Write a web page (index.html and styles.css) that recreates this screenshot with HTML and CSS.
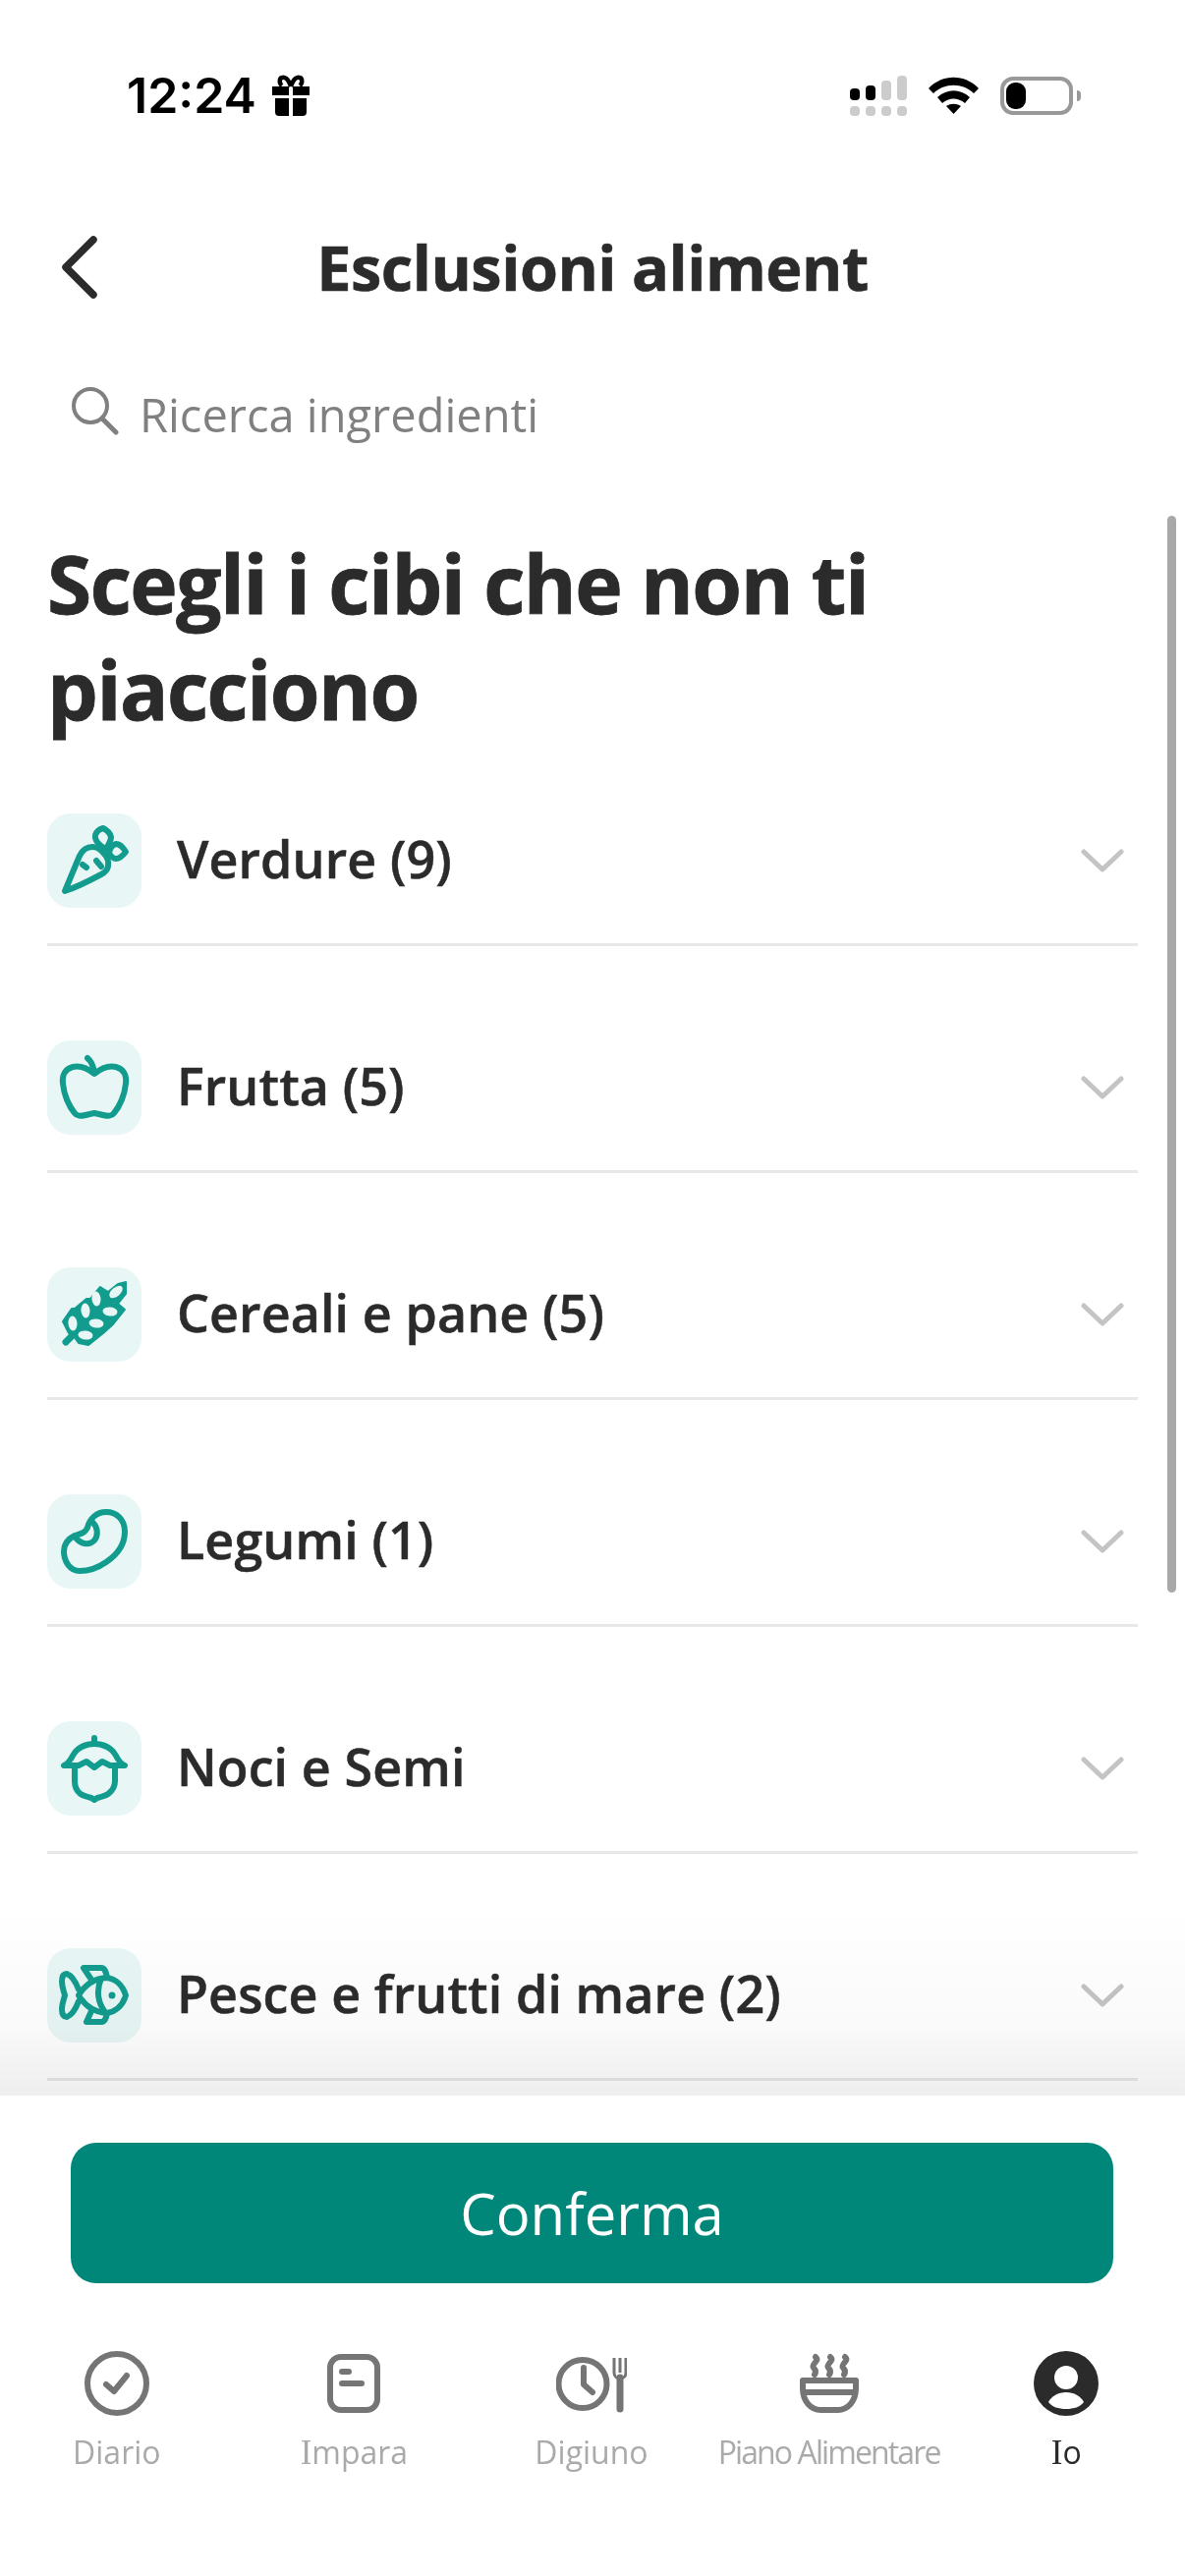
FILE: index.html
```html
<!DOCTYPE html>
<html lang="it">
<head>
    <meta charset="UTF-8">
    <meta name="viewport" content="width=device-width, initial-scale=1.0">
    <title>Esclusioni alimentari</title>
    <link rel="stylesheet" href="styles.css">
</head>
<body>
    <div class="phone">
        <div class="status">
            <div class="clock">
                <span>12:24</span>
                <svg class="gift" viewBox="0 0 40 42"><path d="M1 12h17v9H1zM22 12h17v9H22zM4 24h14v18H8a4 4 0 0 1-4-4zM22 24h14v14a4 4 0 0 1-4 4H22z" fill="#000"/><path d="M20 12c-3-9-7-10-9-9-3 1-3 6 0 8M20 12c3-9 7-10 9-9 3 1 3 6 0 8" fill="none" stroke="#000" stroke-width="4.500"/></svg>
            </div>
            <div class="status-icons">
                <svg class="signal" viewBox="0 0 58 41">
                    <rect x="0" y="13" width="10" height="12" rx="4" fill="#000"/>
                    <rect x="16" y="10" width="10" height="15" rx="4" fill="#000"/>
                    <rect x="32" y="5" width="10" height="20" rx="4" fill="#ccc"/>
                    <rect x="48" y="0" width="10" height="25" rx="4" fill="#ccc"/>
                    <rect x="0" y="31" width="10" height="10" rx="4" fill="#ccc"/>
                    <rect x="16" y="31" width="10" height="10" rx="4" fill="#ccc"/>
                    <rect x="32" y="31" width="10" height="10" rx="4" fill="#ccc"/>
                    <rect x="48" y="31" width="10" height="10" rx="4" fill="#ccc"/>
                </svg>
                <svg class="wifi" viewBox="0 0 51 38"><path d="M0 12C14-3 37-3 51 12l-5 5C35 6 16 6 5 17z"/><path d="M9 21c10-9 23-9 33 0l-5 6c-7-6-16-6-23 0z"/><path d="M18 30c5-3 10-3 15 0l-7.500 8z"/></svg>
                <div class="battery"><div class="battery-level"></div></div>
                <div class="battery-cap"></div>
            </div>
        </div>

        <div class="header">
            <svg class="back" viewBox="0 0 38 64"><path d="M33 4 5 32l28 28" fill="none" stroke="#2b2b2b" stroke-width="7.500" stroke-linecap="round" stroke-linejoin="round"/></svg>
            <h1 class="title">Esclusioni aliment</h1>
        </div>

        <div class="search">
            <svg class="search-icon" viewBox="0 0 50 50"><circle cx="20" cy="20" r="17" fill="none" stroke="#808080" stroke-width="4"/><path d="m32 33 14 14" stroke="#808080" stroke-width="5" stroke-linecap="round"/></svg>
            <span>Ricerca ingredienti</span>
        </div>

        <div class="content">
            <h2 class="heading">Scegli i cibi che non ti piacciono</h2>

            <div class="row">
                <div class="row-icon">
                    <svg viewBox="0 0 96 96" fill="none" stroke="#129c8e" stroke-width="6" stroke-linecap="round" stroke-linejoin="round">
                        <path d="M18 79 33 43c3-6 7-9 13-9 4 0 8 2 11 6 4 4 6 9 5 14-1 4-3 6-7 8-13 7-25 13-37 17z"/>
                        <path d="M36 52l4 3M50 48l5 6"/>
                        <path d="M56 34c-5-4-8-8-7-12 1-3 4-6 8-7 4 2 7 5 8 9 0 3-2 7-5 12z"/>
                        <path d="M63 40c1-5 3-8 7-9 4 0 7 3 10 8-3 4-6 7-10 7-3 0-5-2-7-6z"/>
                    </svg>
                </div>
                <span class="row-label">Verdure (9)</span>
                <svg class="chevron" viewBox="0 0 44 24"><path d="M3 3l19 18L41 3" fill="none" stroke="#c4c4c4" stroke-width="5" stroke-linecap="round" stroke-linejoin="round"/></svg>
            </div>

            <div class="row">
                <div class="row-icon">
                    <svg viewBox="0 0 96 96" fill="none" stroke="#129c8e" stroke-width="6" stroke-linecap="round" stroke-linejoin="round">
                        <path d="M48 34C42 29 34 25 26 27 18 29 15 36 16 44 17 55 22 67 28 74 32 79 38 76 48 74 58 76 64 79 68 74 74 67 79 55 80 44 81 36 78 29 70 27 62 25 54 29 48 34z"/>
                        <path d="M48 33C47 26 45 21 41 18"/>
                    </svg>
                </div>
                <span class="row-label">Frutta (5)</span>
                <svg class="chevron" viewBox="0 0 44 24"><path d="M3 3l19 18L41 3" fill="none" stroke="#c4c4c4" stroke-width="5" stroke-linecap="round" stroke-linejoin="round"/></svg>
            </div>

            <div class="row">
                <div class="row-icon">
                    <svg viewBox="0 0 96 96">
                        <path d="M19 76l10-10" fill="none" stroke="#129c8e" stroke-width="7" stroke-linecap="round"/>
                        <path d="M80 15v12l-8 10 7 6-12 15-10 9-15 12-10-2-5-7-5-3-6-12 9-13h3l12-10h4l10-12 8 5 10-8z" fill="#129c8e" stroke="#129c8e" stroke-width="2" stroke-linejoin="round"/>
                        <g fill="#e8f6f5">
                            <ellipse cx="70" cy="25" rx="8" ry="4.500" transform="rotate(-40 70 25)"/>
                            <ellipse cx="50" cy="32" rx="4.500" ry="7.500" transform="rotate(-5 50 32)"/>
                            <ellipse cx="39" cy="44" rx="4.500" ry="7.500" transform="rotate(-5 39 44)"/>
                            <ellipse cx="26" cy="57" rx="4.500" ry="7.500" transform="rotate(-5 26 57)"/>
                            <ellipse cx="64" cy="45" rx="7.500" ry="4.500" transform="rotate(5 64 45)"/>
                            <ellipse cx="50" cy="57" rx="7.500" ry="4.500" transform="rotate(5 50 57)"/>
                            <ellipse cx="39" cy="69" rx="7.500" ry="4.500" transform="rotate(5 39 69)"/>
                        </g>
                    </svg>
                </div>
                <span class="row-label">Cereali e pane (5)</span>
                <svg class="chevron" viewBox="0 0 44 24"><path d="M3 3l19 18L41 3" fill="none" stroke="#c4c4c4" stroke-width="5" stroke-linecap="round" stroke-linejoin="round"/></svg>
            </div>

            <div class="row">
                <div class="row-icon">
                    <svg viewBox="0 0 96 96" fill="none" stroke="#129c8e" stroke-width="6" stroke-linecap="round" stroke-linejoin="round">
                        <path d="M60 18C70 18 79 25 79 38 79 50 72 61 60 69 50 76 40 78 33 78 23 78 17 68 17 58 17 50 22 45 28 42 34 40 38 40 41 34 43 25 50 18 60 18z"/>
                        <path d="M29 44C33 50 42 53 48 47 52 42 52 34 46 28"/>
                    </svg>
                </div>
                <span class="row-label">Legumi (1)</span>
                <svg class="chevron" viewBox="0 0 44 24"><path d="M3 3l19 18L41 3" fill="none" stroke="#c4c4c4" stroke-width="5" stroke-linecap="round" stroke-linejoin="round"/></svg>
            </div>

            <div class="row">
                <div class="row-icon">
                    <svg viewBox="0 0 96 96" fill="none" stroke="#129c8e" stroke-width="6" stroke-linecap="round" stroke-linejoin="round">
                        <path d="M48 17v6"/>
                        <path d="M17 45C22 43 24 39 26 35 30 27 39 23 48 23 57 23 66 27 70 35 72 39 74 43 79 45H66L64 45 56 41 48 47 40 41 32 45z"/>
                        <path d="M28 47V61C28 67 30 71 34 74 37 76 41 77 45 78L48 80 51 78C55 77 59 76 62 74 66 71 69 67 69 61V47"/>
                    </svg>
                </div>
                <span class="row-label">Noci e Semi</span>
                <svg class="chevron" viewBox="0 0 44 24"><path d="M3 3l19 18L41 3" fill="none" stroke="#c4c4c4" stroke-width="5" stroke-linecap="round" stroke-linejoin="round"/></svg>
            </div>

            <div class="row">
                <div class="row-icon">
                    <svg viewBox="0 0 96 96" fill="none" stroke="#129c8e" stroke-width="6" stroke-linecap="round" stroke-linejoin="round">
                        <path d="M32 48C38 38 48 31 60 30 70 31 77 38 80 48 77 58 70 65 60 66 48 65 38 58 32 48z"/>
                        <path d="M55 31C50 42 51 55 59 65"/>
                        <circle cx="66" cy="48" r="2" fill="#129c8e" stroke-width="3"/>
                        <path d="M32 42C29 34 25 28 20 26 16 26 15 30 15 34 15 40 17 44 18 48 17 52 15 56 15 62 15 66 16 70 20 70 25 68 29 62 32 54"/>
                        <path d="M45 32 37 20H55C59 20 60 25 61 30"/>
                        <path d="M45 64 40 75H55C59 75 60 71 61 66"/>
                    </svg>
                </div>
                <span class="row-label">Pesce e frutti di mare (2)</span>
                <svg class="chevron" viewBox="0 0 44 24"><path d="M3 3l19 18L41 3" fill="none" stroke="#c4c4c4" stroke-width="5" stroke-linecap="round" stroke-linejoin="round"/></svg>
            </div>

            <div class="fade"></div>
            <div class="scrollbar"></div>
        </div>

        <div class="bottom">
            <button class="confirm">Conferma</button>
            <div class="tabs">
                <div class="tab">
                    <svg viewBox="0 0 70 70" fill="none" stroke="#757575" stroke-width="6" stroke-linecap="round" stroke-linejoin="round"><circle cx="35" cy="33" r="30"/><path d="M24 34l8 7 13-16"/></svg>
                    <span class="tab-label">Diario</span>
                </div>
                <div class="tab">
                    <svg viewBox="0 0 70 70" fill="none" stroke="#757575" stroke-width="6" stroke-linecap="round"><rect x="11" y="6" width="48" height="54" rx="11"/><path d="M23 21h7M23 33h20"/></svg>
                    <span class="tab-label"><span class="serif-i">I</span>mpara</span>
                </div>
                <div class="tab">
                    <svg class="tab-wide" viewBox="0 0 72 70" fill="none" stroke="#757575" stroke-width="6" stroke-linecap="round" stroke-linejoin="round"><circle cx="27" cy="33.500" r="24.500"/><path d="M28 17v17l9 8"/><path d="M65 27V59" stroke-width="7"/><path d="M59 7v15c0 4 3 6 6 6s6-2 6-6V7M65 7v15" stroke-width="3" stroke-linecap="butt"/></svg>
                    <span class="tab-label">Digiuno</span>
                </div>
                <div class="tab">
                    <svg viewBox="0 0 70 70" fill="none" stroke="#757575" stroke-width="6" stroke-linecap="round" stroke-linejoin="round"><path d="M8 30H62V38C62 52 53 60 44 60H26C17 60 8 52 8 38z"/><path d="M8 42H62" stroke-linecap="butt"/><path d="M21 6c5 4-5 7-2 11 2 2 3 4 1 7M36 6c5 4-5 7-2 11 2 2 3 4 1 7M51 6c5 4-5 7-2 11 2 2 3 4 1 7"/></svg>
                    <span class="tab-label tab-label-tight">Piano Alimentare</span>
                </div>
                <div class="tab">
                    <svg viewBox="0 0 70 70"><circle cx="35" cy="33" r="33" fill="#2b2b2b"/><circle cx="35" cy="27" r="12" fill="#fff"/><path d="M17 52c3-6 10-10 18-10s15 4 18 10c-4 5-10 7-18 7s-14-2-18-7z" fill="#fff"/></svg>
                    <span class="tab-label tab-label-active"><span class="serif-i">I</span>o</span>
                </div>
            </div>
        </div>
    </div>
</body>
</html>
```

FILE: styles.css
```css
*{margin: 0;padding: 0;box-sizing: border-box;}
body{background: #fff;font-family: "Open Sans", "Noto Sans", sans-serif;color: #2b2b2b;}

.phone{width: 1206px;height: 2622px;overflow: hidden;display: flex;flex-direction: column;background: #fff;}

/* status bar */
.status{height: 160px;flex: none;padding: 76px 106px 0 129px;display: flex;justify-content: space-between;align-items: flex-start;}
.clock{display: flex;align-items: center;gap: 15px;height: 42px;font-family: Inter, sans-serif;font-weight: 600;font-size: 50px;color: #000;}
.gift{width: 40px;height: 42px;}
.status-icons{display: flex;align-items: flex-start;}
.signal{width: 58px;height: 41px;margin-top: 1px;}
.wifi{width: 51px;height: 38px;margin: 2px 22px 0;}
.battery{width: 74px;height: 39px;margin-top: 2px;border: 4px solid #999;border-radius: 13px;padding: 2px;}
.battery-level{width: 20px;height: 27px;background: #000;border-radius: 9px;}
.battery-cap{width: 4px;height: 11px;margin: 16px 0 0 4px;background: #999;border-radius: 0 4px 4px 0;}

/* header */
.header{height: 225px;flex: none;display: flex;align-items: flex-start;justify-content: center;position: relative;}
.back{position: absolute;left: 62px;top: 80px;width: 38px;height: 64px;}
.title{font-size: 63px;font-weight: 700;line-height: 84px;margin-top: 70px;letter-spacing: -.5px;-webkit-text-stroke: .6px #2b2b2b;}

/* search */
.search{height: 80px;flex: none;margin-top: -3px;padding-left: 72px;display: flex;align-items: center;gap: 20px;font-size: 47px;color: #808080;}
.search-icon{width: 50px;height: 50px;margin-top: -8px;}

/* list */
.content{flex: 1;position: relative;overflow: hidden;padding: 0 48px;}
.heading{font-size: 82px;font-weight: 700;line-height: 108px;width: 1000px;margin-top: 77px;margin-bottom: -1px;letter-spacing: -1.500px;-webkit-text-stroke: .8px #2b2b2b;}
.row{height: 209px;padding-top: 38px;margin-bottom: 22px;border-bottom: 3px solid #e8e8e8;display: flex;align-items: center;}
.row-icon{width: 96px;height: 96px;border-radius: 24px;background: #e8f6f5;flex: none;}
.row-icon svg{width: 96px;height: 96px;display: block;}
.row-label{flex: 1;margin: -6px 0 0 36px;font-size: 52px;font-weight: 600;letter-spacing: .1px;-webkit-text-stroke: .5px #2b2b2b;}
.chevron{width: 44px;height: 24px;margin-right: 14px;flex: none;}

.fade{position: absolute;left: 0;right: 0;bottom: 0;height: 190px;background: linear-gradient(#fff, #fafafa 62%, #eee);mix-blend-mode: multiply;}
.scrollbar{position: absolute;right: 9px;top: 63px;width: 9px;height: 1096px;background: #a8a8a8;border-radius: 5px;}

/* bottom */
.bottom{height: 489px;flex: none;background: #fff;padding-top: 48px;}
.confirm{display: block;width: 1061px;height: 143px;margin-left: 72px;border: 0;border-radius: 26px;background: #00877a;color: #fff;font-family: "Open Sans", sans-serif;font-size: 58px;font-weight: 500;}
.tabs{display: grid;grid-template-columns: repeat(5, 241.6px);margin: 69px 0 0 -2px;}
.tab{display: flex;flex-direction: column;align-items: center;}
.tab svg{width: 70px;height: 70px;display: block;}
.tab svg.tab-wide{width: 72px;}
.tab-label{margin-top: 10px;font-size: 32px;line-height: 46px;color: #aaa;white-space: nowrap;}
.tab-label-tight{letter-spacing: -1.900px;}
.tab-label-active{color: #2b2b2b;}
.serif-i{font-family: "Liberation Serif", serif;font-size: 35px;}
```
